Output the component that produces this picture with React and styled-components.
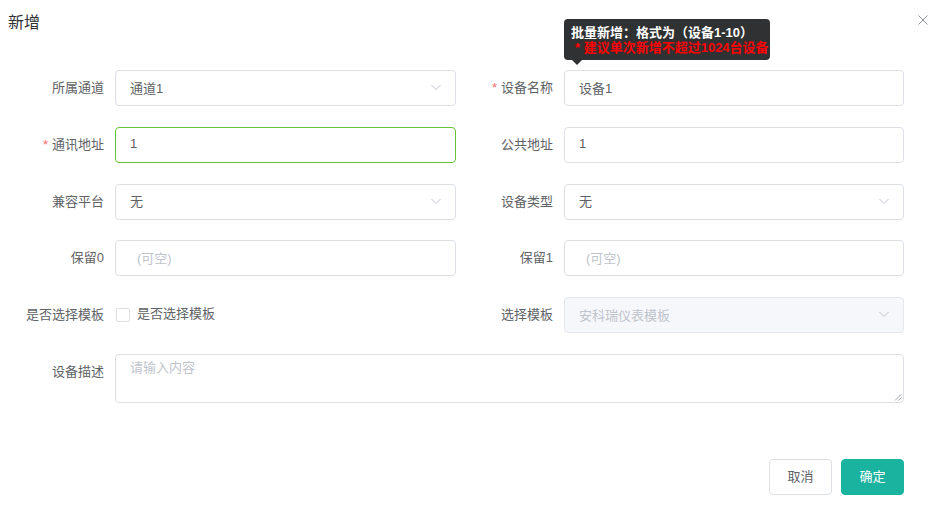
import React from 'react';
import styled, { createGlobalStyle } from 'styled-components';

const GlobalStyle = createGlobalStyle`
    body {
        margin: 0;
        background: #fff;
        font-family: "Liberation Sans", "Noto Sans CJK SC", sans-serif;
    }
`

const Dialog = styled.div`
    width: 942px;
    height: 507px;
    background: #fff;
    box-sizing: border-box;
`

const Header = styled.div`
    display: flex;
    justify-content: space-between;
    align-items: center;
    padding: 11px 14px 0 8px;
    height: 23px;
`

const Title = styled.span`
    font-size: 16px;
    line-height: 24px;
    color: #303133;
`

const Close = styled.svg`
    width: 10px;
    height: 10px;
    margin-top: -6px;
`

const FormGrid = styled.div`
    display: grid;
    grid-template-columns: 441px 440px;
    column-gap: 8px;
    row-gap: 20.8px;
    padding: 36px 0 0 15px;
`

const Item = styled.div`
    display: flex;
    align-items: flex-start;
    grid-column: ${p => (p.wide ? '1 / 3' : 'auto')};
`

const Label = styled.label`
    width: 100px;
    flex: none;
    box-sizing: border-box;
    padding-right: 11px;
    text-align: right;
    line-height: 35px;
    font-size: 13px;
    color: #606266;
    white-space: nowrap;
`

const Star = styled.span`
    color: #f56c6c;
    margin-right: 4px;
`

const Control = styled.div`
    position: relative;
    flex: 1;
    min-width: 0;
`

const Box = styled.div`
    height: 36px;
    box-sizing: border-box;
    border: 1px solid ${p => (p.success ? '#67c23a' : p.disabled ? '#e4e7ed' : '#dcdfe6')};
    background: ${p => (p.disabled ? '#f5f7fa' : '#fff')};
    border-radius: 4px;
    padding: 0 15px 2px ${p => (p.placeholder ? '21px' : '14px')};
    display: flex;
    align-items: center;
    justify-content: space-between;
    font-size: 13px;
    color: ${p => (p.disabled || p.placeholder ? '#c0c4cc' : '#606266')};
`

const Arrow = styled.svg`
    width: 12px;
    height: 12px;
    margin-right: -2px;
`

const CheckRow = styled.div`
    height: 34px;
    display: flex;
    align-items: center;
    gap: 7px;
    font-size: 13px;
    line-height: 16px;
    color: #606266;
`

const CheckBox = styled.span`
    width: 12px;
    height: 12px;
    border: 1px solid #dcdfe6;
    border-radius: 2px;
    background: #fff;
    margin-left: 1px;
    margin-top: 1px;
`

const TextArea = styled.div`
    position: relative;
    height: 49px;
    box-sizing: border-box;
    border: 1px solid #dcdfe6;
    border-radius: 4px;
    padding: 4px 14px;
    font-size: 13px;
    line-height: 18px;
    color: #c0c4cc;
`

const Grip = styled.svg`
    position: absolute;
    right: 1px;
    bottom: 1px;
    width: 8px;
    height: 8px;
`

const Tooltip = styled.div`
    position: absolute;
    left: 0;
    bottom: calc(100% + 10px);
    width: 206px;
    box-sizing: border-box;
    padding: 6px 7px 5px;
    background: #303133;
    border-radius: 4px;
    font-size: 13px;
    font-weight: bold;
    line-height: 15px;
    color: #fff;
    white-space: nowrap;

    &::after {
        content: '';
        position: absolute;
        left: 8px;
        top: 100%;
        border: 5px solid transparent;
        border-top-color: #303133;
    }
`

const Warn = styled.div`
    color: #ff0000;
    padding-left: 4px;
`

const Footer = styled.div`
    display: flex;
    justify-content: flex-end;
    gap: 9px;
    padding: 56px 38px 0 0;
`

const Button = styled.button`
    height: 36px;
    width: 63px;
    box-sizing: border-box;
    border-radius: 4px;
    font-family: inherit;
    font-size: 13px;
    padding: 0 0 2px;
    border: 1px solid ${p => (p.primary ? '#1ab39f' : '#dcdfe6')};
    background: ${p => (p.primary ? '#1ab39f' : '#fff')};
    color: ${p => (p.primary ? '#fff' : '#606266')};
`

const Chevron = () => (
    <Arrow viewBox="0 0 12 12">
        <path d="M1.5 4 L6 8.5 L10.5 4" fill="none" stroke="#c0c4cc" strokeWidth="1" />
    </Arrow>
)

const Field = ({ label, required, children, wide }) => (
    <Item wide={wide}>
        <Label>
            {required && <Star>*</Star>}
            {label}
        </Label>
        <Control>{children}</Control>
    </Item>
)

export default function App() {
    return (
        <Dialog>
            <GlobalStyle />
            <Header>
                <Title>新增</Title>
                <Close viewBox="0 0 10 10">
                    <path d="M0.5 0.5 L9.5 9.5 M9.5 0.5 L0.5 9.5" stroke="#909399" strokeWidth="1" />
                </Close>
            </Header>
            <FormGrid>
                <Field label="所属通道">
                    <Box>通道1<Chevron /></Box>
                </Field>
                <Field label="设备名称" required>
                    <Tooltip>
                        批量新增：格式为（设备1-10）
                        <Warn>* 建议单次新增不超过1024台设备</Warn>
                    </Tooltip>
                    <Box>设备1</Box>
                </Field>
                <Field label="通讯地址" required>
                    <Box success>1</Box>
                </Field>
                <Field label="公共地址">
                    <Box>1</Box>
                </Field>
                <Field label="兼容平台">
                    <Box>无<Chevron /></Box>
                </Field>
                <Field label="设备类型">
                    <Box>无<Chevron /></Box>
                </Field>
                <Field label="保留0">
                    <Box placeholder="true">(可空)</Box>
                </Field>
                <Field label="保留1">
                    <Box placeholder="true">(可空)</Box>
                </Field>
                <Field label="是否选择模板">
                    <CheckRow>
                        <CheckBox />
                        是否选择模板
                    </CheckRow>
                </Field>
                <Field label="选择模板">
                    <Box disabled>安科瑞仪表模板<Chevron /></Box>
                </Field>
                <Field label="设备描述" wide>
                    <TextArea>
                        请输入内容
                        <Grip viewBox="0 0 8 8">
                            <path d="M7.5 1 L1 7.5 M7.5 4.5 L4.5 7.5" stroke="#909399" strokeWidth="0.8" />
                        </Grip>
                    </TextArea>
                </Field>
            </FormGrid>
            <Footer>
                <Button>取消</Button>
                <Button primary>确定</Button>
            </Footer>
        </Dialog>
    )
}
